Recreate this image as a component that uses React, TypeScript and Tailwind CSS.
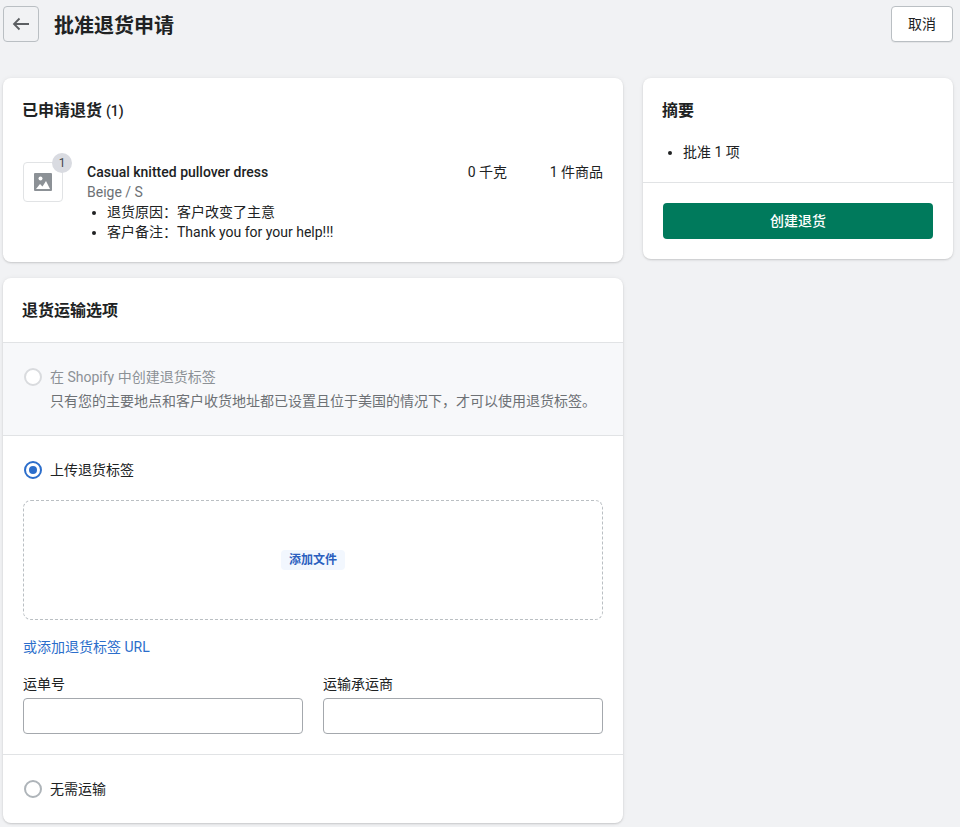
import React from 'react';

function Radio({ state }: { state: 'off' | 'on' | 'disabled' }) {
  if (state === 'on') {
    return (
      <span className="ml-px flex h-[18px] w-[18px] shrink-0 items-center justify-center rounded-full border-2 border-[#2c6ecb] bg-white">
        <span className="h-2 w-2 rounded-full bg-[#2c6ecb]" />
      </span>
    );
  }
  return (
    <span
      className={
        state === 'disabled'
          ? 'ml-px h-[18px] w-[18px] shrink-0 rounded-full border-2 border-[#d9dbde] bg-white'
          : 'ml-px h-[18px] w-[18px] shrink-0 rounded-full border-2 border-[#aeb4b9] bg-white'
      }
    />
  );
}

function Card({ className, children }: { className?: string; children: React.ReactNode }) {
  return (
    <div className={`rounded-lg bg-white shadow-[0_0_5px_rgba(23,24,24,0.05),0_1px_2px_rgba(0,0,0,0.15)] ${className ?? ''}`}>
      {children}
    </div>
  );
}

export default function App() {
  return (
    <div className="h-[827px] w-[960px] overflow-hidden bg-[#f1f2f4] pl-[3px] pr-[7px] pt-[6px] font-['Roboto','Noto_Sans_CJK_SC',sans-serif] text-[14px] leading-[20px] text-[#202223]">
      {/* Header */}
      <div className="flex h-9 items-center">
        <button className="flex h-9 w-9 items-center justify-center rounded border border-[#babfc3] bg-[#f1f2f4] text-[#5c5f62]">
          <svg width="20" height="20" viewBox="0 0 20 20" fill="none" stroke="currentColor" strokeWidth="1.8">
            <path d="M18 10H3M8.5 4.5 3 10l5.5 5.5" />
          </svg>
        </button>
        <h1 className="ml-[15px] flex-1 pt-1 text-[20px] font-bold leading-7">批准退货申请</h1>
        <button className="h-9 w-[62px] rounded border border-[#babfc3] bg-white shadow-[0_1px_0_rgba(0,0,0,0.05)]">取消</button>
      </div>

      <div className="mt-9 flex items-start gap-5">
        {/* Left column */}
        <div className="flex w-[620px] flex-col gap-4">
          <Card className="h-[184px] px-5 pt-[23px]">
            <h2 className="-ml-px text-[16px] font-semibold leading-5">
              已申请退货 <span className="text-[14px] font-medium">(1)</span>
            </h2>
            <div className="mt-[41px] flex">
              <div className="relative flex h-10 w-10 shrink-0 items-center justify-center rounded border border-[#e1e3e5] bg-white">
                <svg width="20" height="20" viewBox="0 0 20 20">
                  <rect x="1" y="1" width="18" height="18" rx="1" fill="#8c9196" />
                  <circle cx="7.5" cy="6.5" r="2" fill="#fff" />
                  <path d="M3 17l4-5 2.5 2.5L13 9l4 8H3z" fill="#fff" />
                </svg>
                <span className="absolute -right-[10px] -top-[10px] flex h-5 w-5 items-center justify-center rounded-full bg-[#d9dbe1] text-[12px] leading-none text-[#44474a]">1</span>
              </div>
              <div className="ml-6 flex-1">
                <div className="font-medium">Casual knitted pullover dress</div>
                <div className="text-[#6d7175]">Beige / S</div>
                <ul className="list-disc pl-5">
                  <li>退货原因：客户改变了主意</li>
                  <li>客户备注：Thank you for your help!!!</li>
                </ul>
              </div>
              <div className="w-[82px]">0 千克</div>
              <div>1 件商品</div>
            </div>
          </Card>

          <Card className="h-[545px]">
            <div className="flex h-[65px] items-center border-b border-[#e1e3e5] px-5 pt-0.5">
              <h2 className="-ml-px text-[16px] font-semibold">退货运输选项</h2>
            </div>
            <div className="h-[93px] border-b border-[#e1e3e5] bg-[#f7f8fa] px-5 pt-6">
              <div className="flex items-center gap-2 text-[#8c9196]">
                <Radio state="disabled" />
                <span>在 Shopify 中创建退货标签</span>
              </div>
              <div className="ml-[27px] mt-[4px] whitespace-nowrap text-[#6d7175]">只有您的主要地点和客户收货地址都已设置且位于美国的情况下，才可以使用退货标签。</div>
            </div>
            <div className="border-b border-[#e1e3e5] px-5 pt-6 pb-5">
              <div className="flex items-center gap-2">
                <Radio state="on" />
                <span>上传退货标签</span>
              </div>
              <div className="mt-[20px] flex h-[120px] items-center justify-center rounded-lg border border-dashed border-[#babfc3]">
                <span className="rounded bg-[#f2f7fe] px-2 text-[12px] font-semibold text-[#2a5fbf]">添加文件</span>
              </div>
              <a className="mt-[17px] block text-[#2c6ecb]">或添加退货标签 URL</a>
              <div className="mt-[17px] grid grid-cols-2 gap-5">
                <label className="block">
                  <span className="block">运单号</span>
                  <input className="mt-1 block h-9 w-full rounded border border-[#a4a8ad] bg-white" />
                </label>
                <label className="block">
                  <span className="block">运输承运商</span>
                  <input className="mt-1 block h-9 w-full rounded border border-[#a4a8ad] bg-white" />
                </label>
              </div>
            </div>
            <div className="flex items-center gap-2 px-5 pt-6">
              <Radio state="off" />
              <span>无需运输</span>
            </div>
          </Card>
        </div>

        {/* Summary */}
        <Card className="h-[181px] w-[310px]">
          <div className="h-[105px] border-b border-[#e1e3e5] px-5 pt-[23px]">
            <h2 className="-ml-px text-[16px] font-semibold leading-5">摘要</h2>
            <ul className="mt-[21px] list-disc pl-5">
              <li>批准 1 项</li>
            </ul>
          </div>
          <div className="px-5 pt-5">
            <button className="h-9 w-full rounded bg-[#007a5c] font-medium text-white">创建退货</button>
          </div>
        </Card>
      </div>
    </div>
  );
}
